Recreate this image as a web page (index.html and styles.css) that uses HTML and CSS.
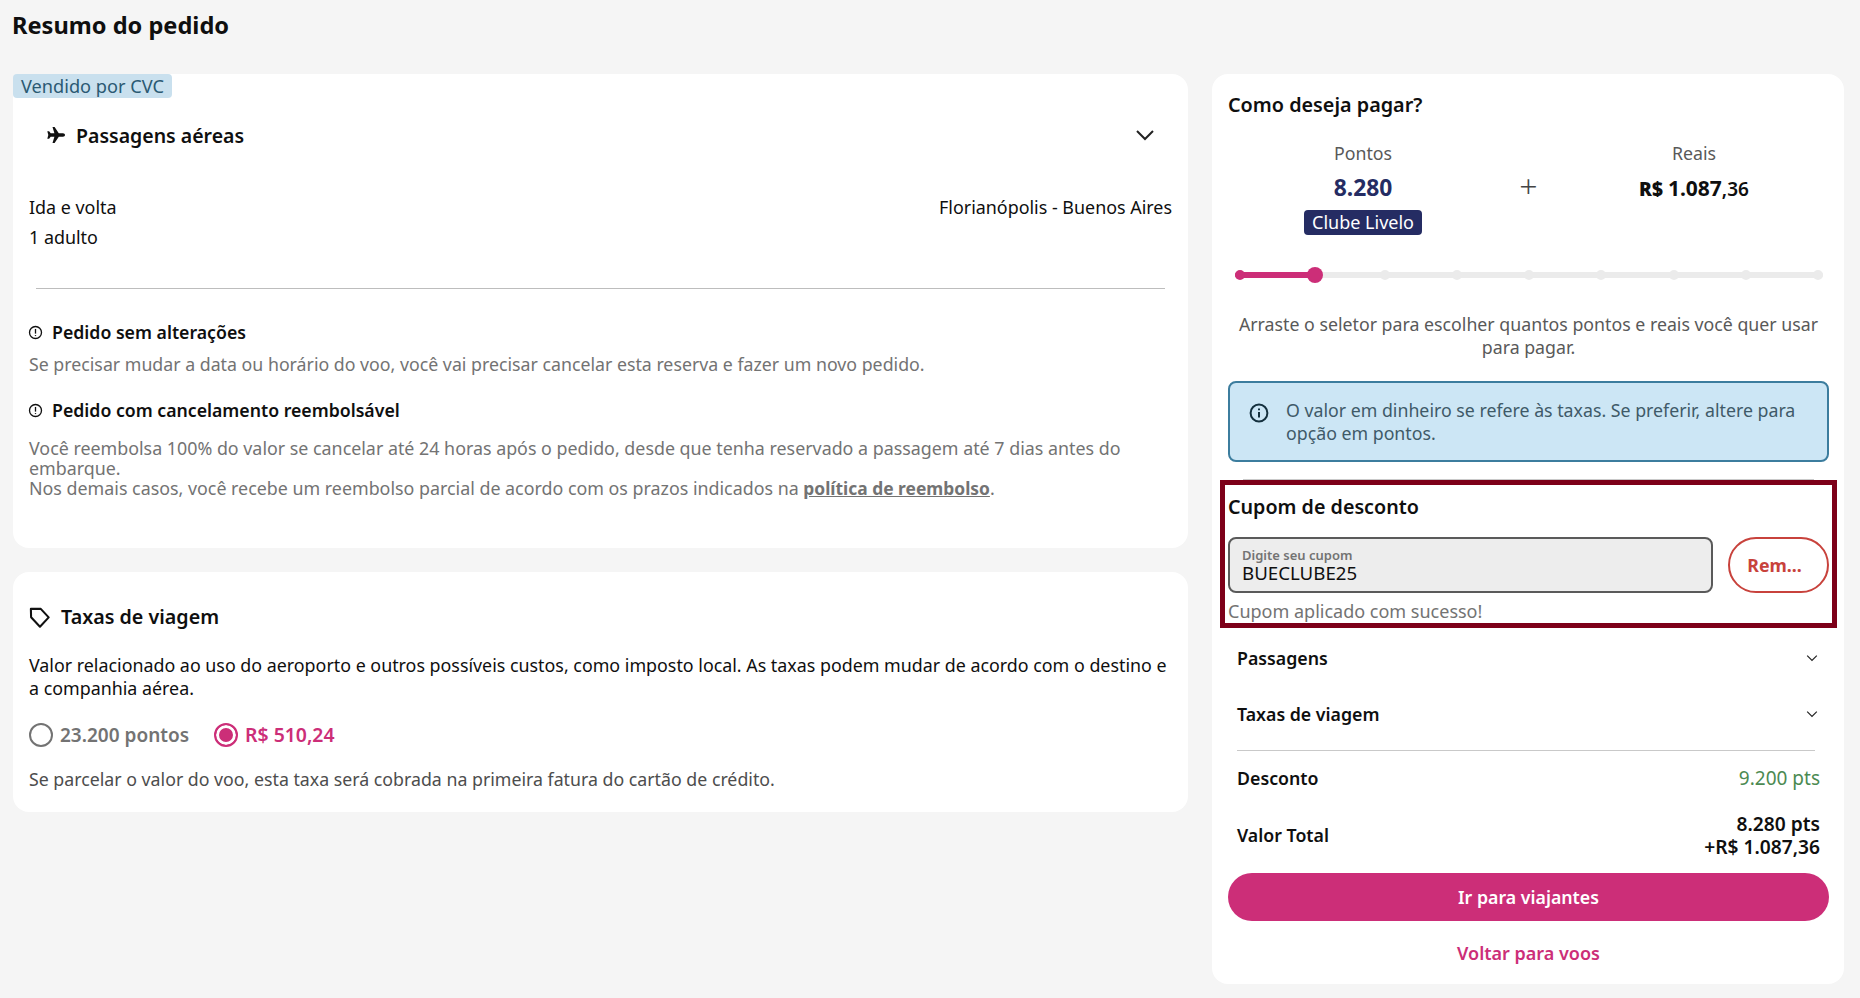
FILE: index.html
```html
<!doctype html>
<html lang="pt-BR">
  <head>
    <meta charset="utf-8">
    <title>Resumo do pedido</title>
    <link rel="stylesheet" href="styles.css">
  </head>
  <body>
    <h1 class="page-title">Resumo do pedido</h1>
    <div class="columns">
      <div class="left-col">
        <section class="card flight-card">
          <span class="seller-tag">Vendido por CVC</span>
          <div class="flight-head">
            <svg class="plane-icon" viewBox="0 0 18 16"><path d="M18 8c0-1-1-1.7-2-1.7h-4.2L7.6 0H5.5l1.9 6.3H3.7L2.1 4.2H.3L1.3 8 .3 11.8h1.8l1.6-2.1h3.7L5.5 16h2.1l4.2-6.3H16c1 0 2-.7 2-1.7z"/></svg>
            <span class="flight-title">Passagens aéreas</span>
            <svg class="chevron chevron-big" viewBox="0 0 20 12"><path d="M2 2l8 8 8-8"/></svg>
          </div>
          <div class="trip-row">
            <div class="trip-info">
              <p>Ida e volta</p>
              <p>1 adulto</p>
            </div>
            <p>Florianópolis - Buenos Aires</p>
          </div>
          <hr class="flight-rule">
          <div class="notice">
            <h3 class="notice-title">
              <svg class="alert-icon" viewBox="0 0 16 16"><circle cx="8" cy="8" r="6.4"/><path d="M8 4.2v5"/><path d="M8 10.8v1"/></svg>
              Pedido sem alterações
            </h3>
            <p class="notice-text">Se precisar mudar a data ou horário do voo, você vai precisar cancelar esta reserva e fazer um novo pedido.</p>
          </div>
          <div class="notice notice-second">
            <h3 class="notice-title">
              <svg class="alert-icon" viewBox="0 0 16 16"><circle cx="8" cy="8" r="6.4"/><path d="M8 4.2v5"/><path d="M8 10.8v1"/></svg>
              Pedido com cancelamento reembolsável
            </h3>
            <p class="notice-text notice-long">Você reembolsa 100% do valor se cancelar até 24 horas após o pedido, desde que tenha reservado a passagem até 7 dias antes do embarque.<br>Nos demais casos, você recebe um reembolso parcial de acordo com os prazos indicados na <a href="#">política de reembolso</a>.</p>
          </div>
        </section>

        <section class="card fees-card">
          <h2 class="fees-title">
            <svg class="tag-icon" viewBox="0 0 20 20"><path d="M2.5 2.5h8.6l6.9 7.4-7.6 8.1-7.7-8.2z"/></svg>
            Taxas de viagem
          </h2>
          <p class="fees-text">Valor relacionado ao uso do aeroporto e outros possíveis custos, como imposto local. As taxas podem mudar de acordo com o destino e a companhia aérea.</p>
          <div class="radio-row">
            <label class="radio-opt"><span class="radio"></span>23.200 pontos</label>
            <label class="radio-opt radio-on"><span class="radio"></span>R$ 510,24</label>
          </div>
          <p class="fees-foot">Se parcelar o valor do voo, esta taxa será cobrada na primeira fatura do cartão de crédito.</p>
        </section>
      </div>

      <aside class="card pay-card">
        <h2 class="pay-title">Como deseja pagar?</h2>
        <div class="split">
          <div class="split-col">
            <span class="split-label">Pontos</span>
            <strong class="split-points">8.280</strong>
            <span class="club-tag">Clube Livelo</span>
          </div>
          <div class="split-plus">+</div>
          <div class="split-col">
            <span class="split-label">Reais</span>
            <span class="split-money"><b>R$</b> <b class="big">1.087</b>,36</span>
          </div>
        </div>
        <div class="slider">
          <div class="slider-fill"></div>
          <span class="stop stop-on"></span>
          <span class="stop thumb"></span>
          <span class="stop"></span>
          <span class="stop"></span>
          <span class="stop"></span>
          <span class="stop"></span>
          <span class="stop"></span>
          <span class="stop"></span>
          <span class="stop"></span>
        </div>
        <p class="slider-help">Arraste o seletor para escolher quantos pontos e reais você quer usar para pagar.</p>
        <div class="info-box">
          <svg class="info-icon" viewBox="0 0 20 20"><circle cx="10" cy="10" r="8.4"/><path d="M10 9v5.4"/><path d="M10 5.6v1.6"/></svg>
          <p>O valor em dinheiro se refere às taxas. Se preferir, altere para opção em pontos.</p>
        </div>
        <div class="thin-rule"></div>
        <div class="coupon-box">
          <h3 class="coupon-title">Cupom de desconto</h3>
          <div class="coupon-row">
            <div class="coupon-field">
              <span class="coupon-label">Digite seu cupom</span>
              <span class="coupon-value">BUECLUBE25</span>
            </div>
            <button class="coupon-btn">Rem...</button>
          </div>
          <p class="coupon-msg">Cupom aplicado com sucesso!</p>
        </div>
        <div class="summary">
          <div class="sum-row sum-toggle">
            <span class="sum-label">Passagens</span>
            <svg class="chevron" viewBox="0 0 20 12"><path d="M2 2l8 8 8-8"/></svg>
          </div>
          <div class="sum-row sum-toggle">
            <span class="sum-label">Taxas de viagem</span>
            <svg class="chevron" viewBox="0 0 20 12"><path d="M2 2l8 8 8-8"/></svg>
          </div>
          <div class="sum-rule"></div>
          <div class="sum-row sum-discount">
            <span class="sum-label">Desconto</span>
            <span class="sum-green">9.200 pts</span>
          </div>
          <div class="sum-row sum-total">
            <span class="sum-label">Valor Total</span>
            <span class="sum-value">8.280 pts<br>+R$ 1.087,36</span>
          </div>
        </div>
        <button class="main-btn">Ir para viajantes</button>
        <a class="back-link" href="#">Voltar para voos</a>
      </aside>
    </div>
  </body>
</html>
```

FILE: styles.css
```css
* {
  box-sizing: border-box;
}

body {
  margin: 0;
  height: 998px;
  overflow: hidden;
  background: #f5f5f5;
  color: #0f0f0f;
  font-family: "Noto Sans", sans-serif;
  font-size: 17.75px;
}

p, h1, h2, h3 {
  margin: 0;
}

.page-title {
  height: 74px;
  padding: 9px 0 0 12px;
  font-size: 23.6px;
  line-height: 32px;
  font-weight: 700;
}

.columns {
  display: flex;
  gap: 24px;
  padding: 0 16px 0 13px;
}

.left-col {
  display: flex;
  flex-direction: column;
  gap: 24px;
  width: 1175px;
}

.card {
  background: #fff;
  border-radius: 16px;
}

/* left column */
.flight-card {
  height: 474px;
  padding-bottom: 40px;
}

.seller-tag {
  display: block;
  width: fit-content;
  height: 24px;
  padding: 0 8px;
  background: #c9e0ee;
  border-radius: 4px;
  color: #2b5a73;
  font-size: 18.2px;
  line-height: 24px;
}

.flight-head {
  display: flex;
  align-items: center;
  height: 24px;
  margin-top: 25px;
  padding: 0 33px 0 34px;
}

.plane-icon {
  width: 18px;
  height: 16px;
  fill: #111;
  margin-right: 11px;
}

.flight-title {
  flex: 1;
  font-size: 19.5px;
  font-weight: 600;
}

.chevron {
  width: 12px;
  height: 8px;
  fill: none;
  stroke: #222;
  stroke-width: 2;
}

.chevron-big {
  width: 20px;
  height: 12px;
}

.trip-row {
  display: flex;
  justify-content: space-between;
  margin-top: 45px;
  padding: 0 16px;
  font-size: 17.9px;
  line-height: 30px;
}

.flight-rule {
  margin: 36px 23px 0;
  border: 0;
  border-top: 1px solid #bdbdbd;
}

.notice {
  margin-top: 31px;
  padding: 0 16px;
}

.notice-second {
  margin-top: 22px;
}

.notice-title {
  display: flex;
  align-items: center;
  gap: 9px;
  font-size: 17.7px;
  line-height: 24px;
  font-weight: 600;
}

.alert-icon {
  width: 15px;
  height: 15px;
  margin-left: -1px;
  fill: none;
  stroke: #111;
  stroke-width: 1.4;
}

.notice-text {
  margin-top: 8px;
  color: #737373;
  line-height: 24px;
}

.notice-long {
  margin-top: 16px;
  font-size: 17.85px;
  line-height: 20px;
}

.notice-long a {
  color: #737373;
  font-size: 17.4px;
  font-weight: 700;
}

.fees-card {
  height: 240px;
  padding: 31px 16px 0;
}

.fees-title {
  display: flex;
  align-items: center;
  gap: 10px;
  font-size: 19.7px;
  line-height: 28px;
  font-weight: 600;
}

.tag-icon {
  width: 23px;
  height: 23px;
  margin-left: -1px;
  fill: none;
  stroke: #111;
  stroke-width: 1.8;
  stroke-linejoin: round;
}

.fees-text {
  margin-top: 23px;
  font-size: 17.85px;
  line-height: 23px;
}

.radio-row {
  display: flex;
  gap: 25px;
  margin-top: 22px;
}

.radio-opt {
  display: flex;
  align-items: center;
  gap: 7px;
  color: #737373;
  font-size: 19px;
  font-weight: 600;
  line-height: 26px;
}

.radio {
  width: 24px;
  height: 24px;
  border: 2px solid #737373;
  border-radius: 50%;
}

.radio-on {
  color: #cc2e78;
  font-size: 19.4px;
}

.radio-on .radio {
  border-color: #cc2e78;
  background: #cc2e78;
  box-shadow: inset 0 0 0 3px #fff;
}

.fees-foot {
  margin-top: 20px;
  color: #4d4d4d;
  line-height: 23px;
}

/* right column */
.pay-card {
  display: flex;
  flex-direction: column;
  width: 632px;
  height: 910px;
  padding: 16px 15px 0 16px;
}

.pay-title {
  font-size: 19.8px;
  line-height: 30px;
  font-weight: 600;
}

.split {
  display: grid;
  grid-template-columns: 270px 1fr 270px;
  margin-top: 21px;
  text-align: center;
}

.split-col {
  display: flex;
  flex-direction: column;
  align-items: center;
}

.split-label {
  color: #595959;
  line-height: 24px;
}

.split-points {
  margin-top: 10px;
  color: #252c63;
  font-size: 22.8px;
  line-height: 26px;
  font-weight: 700;
}

.club-tag {
  margin-top: 9px;
  padding: 0 8px;
  height: 25px;
  background: #252c63;
  border-radius: 4px;
  color: #fff;
  font-size: 18px;
  line-height: 25px;
}

.split-plus {
  margin-top: 26px;
  color: #444;
  font-size: 32px;
  font-weight: 300;
  line-height: 38px;
}

.split-money {
  margin-top: 10px;
  line-height: 26px;
  font-size: 19px;
  font-weight: 600;
}

.split-money .big {
  font-size: 21px;
  font-weight: 700;
}

.slider {
  position: relative;
  display: flex;
  align-items: center;
  justify-content: space-between;
  height: 6px;
  margin: 37px 6px 0 7px;
  background: #ebebeb;
  border-radius: 3px;
}

.slider-fill {
  position: absolute;
  left: 0;
  top: 0;
  width: 80px;
  height: 6px;
  background: #cc2e78;
  border-radius: 3px;
}

.stop {
  position: relative;
  width: 10px;
  height: 10px;
  background: #ebebeb;
  border-radius: 50%;
}

.stop-on {
  background: #cc2e78;
}

.thumb {
  width: 16px;
  height: 16px;
  margin-right: -6px;
  background: #cc2e78;
}

.slider-help {
  margin-top: 35px;
  color: #595959;
  text-align: center;
  line-height: 23px;
}

.info-box {
  display: flex;
  gap: 17px;
  height: 81px;
  margin-top: 22px;
  padding: 16px 20px;
  background: #cce6f5;
  border: 2px solid #3c7d9e;
  border-radius: 8px;
  color: #3f5a68;
  line-height: 22.5px;
}

.info-icon {
  flex: none;
  width: 20px;
  height: 20px;
  margin-top: 4px;
  margin-left: -1px;
  fill: none;
  stroke: #14303e;
  stroke-width: 2;
}

.thin-rule {
  height: 1px;
  margin: 17px 15px 0;
  background: #c9c9c9;
}

.coupon-box {
  height: 148px;
  margin: 0 -8px;
  padding: 8px 3px 0;
  border: 5px solid #7d0019;
}

.coupon-title {
  font-size: 19.7px;
  line-height: 28px;
  font-weight: 600;
}

.coupon-row {
  display: flex;
  gap: 15px;
  margin-top: 16px;
}

.coupon-field {
  display: flex;
  flex: 1;
  flex-direction: column;
  justify-content: center;
  height: 56px;
  padding: 0 12px;
  background: #ededed;
  border: 2px solid #5a5a5a;
  border-radius: 8px;
}

.coupon-label {
  color: #737373;
  font-size: 13px;
  line-height: 15px;
  font-weight: 600;
}

.coupon-value {
  font-size: 18.7px;
  line-height: 20px;
}

.coupon-btn {
  width: 101px;
  height: 56px;
  padding: 0 8px 0 0;
  background: #fff;
  border: 2px solid #c8423c;
  border-radius: 28px;
  color: #c8423c;
  font-family: inherit;
  font-size: 17.75px;
  font-weight: 700;
}

.coupon-msg {
  margin-top: 6px;
  color: #737373;
  font-size: 18px;
  line-height: 24px;
}

.summary {
  padding: 2px 9px 0;
}

.sum-row {
  display: flex;
  align-items: center;
  justify-content: space-between;
}

.sum-toggle {
  height: 56px;
}

.sum-toggle .chevron {
  margin-right: 2px;
}

.sum-label {
  font-weight: 600;
}

.sum-rule {
  height: 1px;
  margin-top: 8px;
  margin-right: 5px;
  background: #c9c9c9;
}

.sum-discount {
  height: 54px;
}

.sum-green {
  color: #4c8a52;
  font-size: 19px;
}

.sum-total {
  height: 59px;
}

.sum-value {
  font-size: 19.2px;
  font-weight: 600;
  text-align: right;
  line-height: 23px;
}

.main-btn {
  height: 48px;
  margin-top: 9px;
  background: #cc2e78;
  border: 0;
  border-radius: 24px;
  color: #fff;
  font-family: inherit;
  font-size: 17.75px;
  font-weight: 600;
}

.back-link {
  margin-top: 20px;
  color: #cc2e78;
  font-size: 18px;
  font-weight: 600;
  line-height: 24px;
  text-align: center;
  text-decoration: none;
}
```
